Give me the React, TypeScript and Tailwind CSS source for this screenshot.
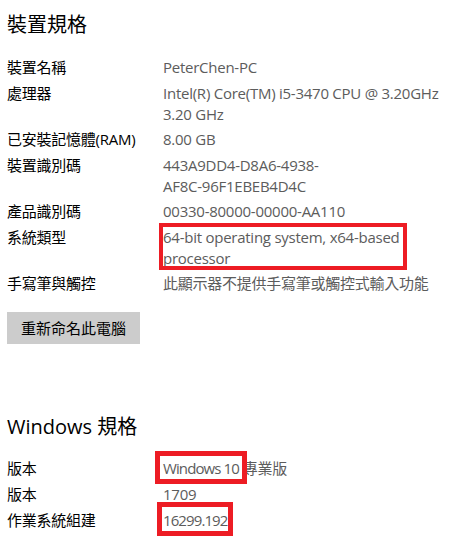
import React from "react";

const font = { fontFamily: '"Open Sans", "Noto Sans CJK TC", sans-serif' };

function Row({ label, children }: { label: string; children: React.ReactNode }) {
  return (
    <div className="flex">
      <div className="w-[156px] shrink-0 text-[#000]">{label}</div>
      <div className="relative text-[#5c5c5c] whitespace-nowrap">{children}</div>
    </div>
  );
}

export default function App() {
  return (
    <div
      className="w-[467px] h-[537px] bg-white overflow-hidden pl-[7px] text-[15px] leading-[21px] tracking-[-0.25px]"
      style={font}
    >
      <div className="pt-[11px] text-[20px] leading-[28px] tracking-normal text-[#000]">裝置規格</div>
      <div className="mt-[18px] flex flex-col gap-[4.5px]">
        <Row label="裝置名稱">PeterChen-PC</Row>
        <Row label="處理器">
          Intel(R) Core(TM) i5-3470 CPU @ 3.20GHz
          <br />
          3.20 GHz
        </Row>
        <Row label="已安裝記憶體(RAM)">8.00 GB</Row>
        <Row label="裝置識別碼">
          443A9DD4-D8A6-4938-
          <br />
          AF8C-96F1EBEB4D4C
        </Row>
        <Row label="產品識別碼">00330-80000-00000-AA110</Row>
        <Row label="系統類型">
          64-bit operating system, x64-based
          <br />
          processor
          <div className="absolute left-[-4px] top-[-4px] w-[248px] h-[47px] border-[4px] border-[#ed1c24]" />
        </Row>
        <Row label="手寫筆與觸控">此顯示器不提供手寫筆或觸控式輸入功能</Row>
      </div>
      <button
        className="mt-[18px] w-[133px] h-[32px] bg-[#cccccc] text-[15px] tracking-normal text-[#000]"
        style={font}
      >
        重新命名此電腦
      </button>
      <div className="mt-[69px] text-[20px] leading-[28px] tracking-normal text-[#000]">Windows 規格</div>
      <div className="mt-[17px] flex flex-col gap-[5px]">
        <Row label="版本">
          <span className="tracking-[-0.9px]">Windows 10</span>
          <span className="ml-[4px]">專業版</span>
          <div className="absolute left-[-8px] top-[-7px] w-[92px] h-[33px] border-[5px] border-[#ed1c24]" />
        </Row>
        <Row label="版本">1709</Row>
        <Row label="作業系統組建">
          <span className="tracking-[-0.9px]">16299.192</span>
          <div className="absolute left-[-6px] top-[-8px] w-[76px] h-[34px] border-[5px] border-[#ed1c24]" />
        </Row>
      </div>
    </div>
  );
}
